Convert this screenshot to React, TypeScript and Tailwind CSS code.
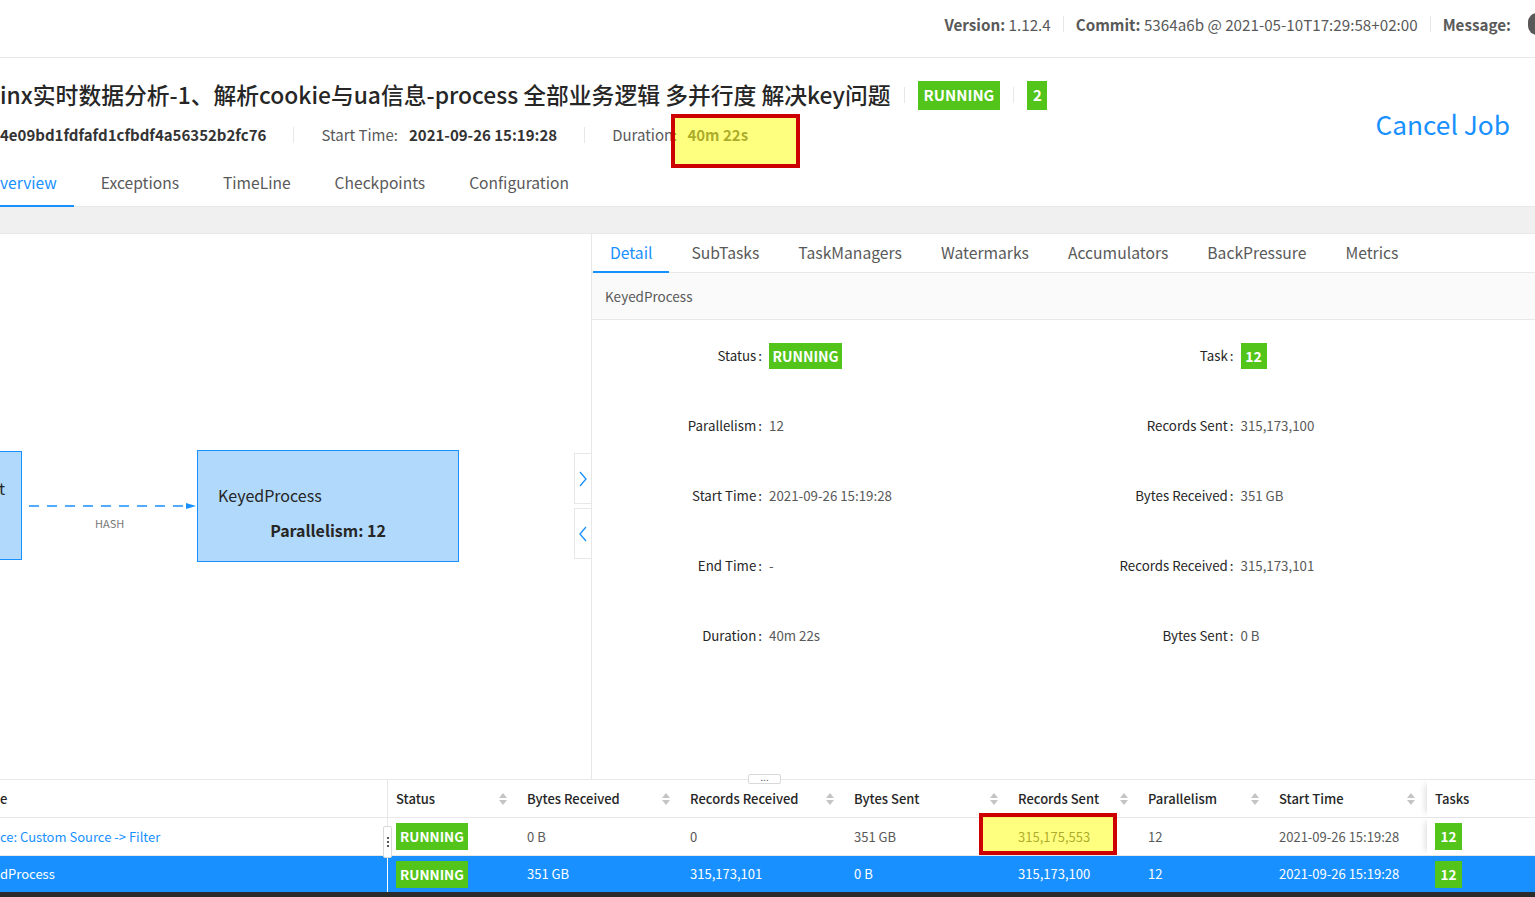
import React from "react";

function SortIcon() {
  return (
    <svg width="10" height="16" viewBox="0 0 10 16" className="shrink-0">
      <path d="M5 2 L9 7 H1 Z" fill="#c4c4c4" />
      <path d="M5 14 L9 9 H1 Z" fill="#c4c4c4" />
    </svg>
  );
}

function Badge({ children, className = "" }: { children: React.ReactNode; className?: string }) {
  return (
    <span className={"inline-flex items-center justify-center bg-[#52c41a] text-white font-bold " + className}>
      {children}
    </span>
  );
}

const cols = [
  { w: "w-[131px]", label: "Status" },
  { w: "w-[163px]", label: "Bytes Received" },
  { w: "w-[164px]", label: "Records Received" },
  { w: "w-[164px]", label: "Bytes Sent" },
  { w: "w-[130px]", label: "Records Sent" },
  { w: "w-[131px]", label: "Parallelism" },
  { w: "w-[156px]", label: "Start Time" },
];

function DetailRow({ l1, v1, l2, v2 }: { l1: string; v1: React.ReactNode; l2: string; v2: React.ReactNode }) {
  return (
    <div className="flex h-[70px] items-center">
      <div className="flex w-1/2 items-center">
        <div className="w-[170px] text-right text-[#262626] whitespace-nowrap">
          {l1}
          <span className="ml-[2px]">:</span>
        </div>
        <div className="ml-[7px] whitespace-nowrap">{v1}</div>
      </div>
      <div className="flex w-1/2 items-center">
        <div className="w-[170px] text-right text-[#262626] whitespace-nowrap">
          {l2}
          <span className="ml-[2px]">:</span>
        </div>
        <div className="ml-[7px] whitespace-nowrap">{v2}</div>
      </div>
    </div>
  );
}

export default function App() {
  return (
    <div className="w-[1535px] h-[897px] overflow-hidden bg-white flex flex-col text-[#595959] font-['Noto_Sans_CJK_SC','Noto_Sans',sans-serif]">
      {/* Top header */}
      <div className="h-[58px] shrink-0 border-b border-[#e8e8e8] flex justify-end items-start pt-[13px] text-[15.2px] leading-[22px] whitespace-nowrap">
        <div className="flex items-center">
          <span>
            <b className="font-bold">Version:</b> 1.12.4
          </span>
          <span className="mx-[12px] h-[16px] w-px bg-[#e8e8e8]" />
          <span>
            <b className="font-bold">Commit:</b> 5364a6b @ 2021-05-10T17:29:58+02:00
          </span>
          <span className="mx-[12px] h-[16px] w-px bg-[#e8e8e8]" />
          <b className="font-bold">Message:</b>
          <span className="ml-[17px] -mr-[11px] w-[18px] h-[22px] rounded-full bg-[#595959]" />
        </div>
      </div>

      {/* Job info */}
      <div className="flex shrink-0 h-[102px]">
        <div className="flex-1 min-w-0 pt-[21px]">
          <div className="flex items-center h-[32px] whitespace-nowrap">
            <h1 className="text-[22.8px] leading-[32px] text-[#262626] font-medium">
              inx实时数据分析-1、解析cookie与ua信息-process 全部业务逻辑 多并行度 解决key问题
            </h1>
            <span className="mx-[13px] h-[16px] w-px bg-[#e8e8e8]" />
            <Badge className="h-[29px] px-[6px] text-[15px]">RUNNING</Badge>
            <span className="mx-[13px] h-[16px] w-px bg-[#e8e8e8]" />
            <Badge className="h-[29px] w-[20px] text-[15px]">2</Badge>
          </div>
          <div className="flex items-center h-[24px] mt-[12px] text-[15px] whitespace-nowrap">
            <span className="font-bold text-[#333]">4e09bd1fdfafd1cfbdf4a56352b2fc76</span>
            <span className="mx-[27px] w-px h-[16px] bg-[#e8e8e8]" />
            <span>Start Time:</span>
            <span className="ml-[11px] font-bold text-[#333]">2021-09-26 15:19:28</span>
            <span className="mx-[27px] w-px h-[16px] bg-[#e8e8e8]" />
            <span className="relative">
              <span>Duration:</span>
              <span className="ml-[10px] font-bold">40m 22s</span>
              <span className="absolute left-[59px] top-[-10px] w-[129px] h-[54px] border-[4px] border-[#cc0000] bg-[rgba(255,255,0,0.5)]" />
            </span>
          </div>
        </div>
        <div className="pt-[48px] pr-[25px] text-[26.3px] leading-[36px] text-[#1890ff] whitespace-nowrap">Cancel Job</div>
      </div>

      {/* Job tabs */}
      <div className="flex h-[47px] shrink-0 border-b border-[#e8e8e8] text-[15.6px] gap-[10px] whitespace-nowrap">
        <div className="relative -ml-[17px] px-[17px] flex items-center text-[#1890ff]">
          verview
          <span className="absolute left-0 right-0 bottom-[-1px] h-[2px] bg-[#1890ff]" />
        </div>
        <div className="px-[17px] flex items-center">Exceptions</div>
        <div className="px-[17px] flex items-center">TimeLine</div>
        <div className="px-[17px] flex items-center">Checkpoints</div>
        <div className="px-[17px] flex items-center">Configuration</div>
      </div>

      <div className="h-[27px] shrink-0 bg-[#f0f0f0] border-b border-[#e8e8e8]" />

      {/* Main */}
      <div className="flex h-[545px] shrink-0">
        {/* Graph canvas */}
        <div className="relative w-[592px] h-full border-r border-[#e8e8e8] overflow-hidden">
          <div className="absolute left-[-240px] top-[217px] w-[262px] h-[109px] bg-[#b0d9fc] border border-[#1890ff]" />
          <span className="absolute left-[-1px] top-[243px] text-[16px] leading-[22px] text-[#262626]">t</span>
          <svg className="absolute left-[28px] top-[266px]" width="170" height="12" viewBox="0 0 170 12">
            <line x1="1" y1="6" x2="160" y2="6" stroke="#1890ff" strokeWidth="1.3" strokeDasharray="10 8" />
            <path d="M158 3 L168 6 L158 9 Z" fill="#1890ff" />
          </svg>
          <span className="absolute left-[95px] top-[281px] text-[11px] leading-[16px] text-[#777]">HASH</span>
          <div className="absolute left-[197px] top-[216px] w-[262px] h-[112px] bg-[#b0d9fc] border border-[#1890ff] text-[16px] text-[#262626]">
            <div className="absolute left-[20px] top-[33px] leading-[22px]">KeyedProcess</div>
            <div className="absolute left-0 right-0 top-[68px] text-center leading-[22px] font-bold">Parallelism: 12</div>
          </div>
          <div className="absolute right-0 top-[219px] w-[17px] h-[51px] bg-white border border-r-0 border-[#e8e8e8] flex items-center justify-center">
            <svg width="10" height="16" viewBox="0 0 10 16">
              <path d="M2 1 L8 8 L2 15" fill="none" stroke="#1890ff" strokeWidth="1.3" />
            </svg>
          </div>
          <div className="absolute right-0 top-[274px] w-[17px] h-[51px] bg-white border border-r-0 border-[#e8e8e8] flex items-center justify-center">
            <svg width="10" height="16" viewBox="0 0 10 16">
              <path d="M8 1 L2 8 L8 15" fill="none" stroke="#1890ff" strokeWidth="1.3" />
            </svg>
          </div>
        </div>

        {/* Right panel */}
        <div className="flex-1 min-w-0 flex flex-col">
          <div className="flex h-[39px] shrink-0 border-b border-[#e8e8e8] pl-[1px] gap-[5px] text-[15.7px] whitespace-nowrap">
            <div className="relative px-[17px] flex items-center text-[#1890ff]">
              Detail
              <span className="absolute left-0 right-0 bottom-[-1px] h-[2px] bg-[#1890ff]" />
            </div>
            <div className="px-[17px] flex items-center">SubTasks</div>
            <div className="px-[17px] flex items-center">TaskManagers</div>
            <div className="px-[17px] flex items-center">Watermarks</div>
            <div className="px-[17px] flex items-center">Accumulators</div>
            <div className="px-[17px] flex items-center">BackPressure</div>
            <div className="px-[17px] flex items-center">Metrics</div>
          </div>
          <div className="h-[47px] shrink-0 bg-[#fafafa] border-b border-[#e8e8e8] px-[13px] flex items-center text-[13.5px]">
            KeyedProcess
          </div>
          <div className="pt-[1px] text-[13.3px]">
            <DetailRow
              l1="Status"
              v1={<Badge className="h-[26px] w-[73px] text-[14px]">RUNNING</Badge>}
              l2="Task"
              v2={<Badge className="h-[26px] w-[26px] text-[14px]">12</Badge>}
            />
            <DetailRow l1="Parallelism" v1="12" l2="Records Sent" v2="315,173,100" />
            <DetailRow l1="Start Time" v1="2021-09-26 15:19:28" l2="Bytes Received" v2="351 GB" />
            <DetailRow l1="End Time" v1="-" l2="Records Received" v2="315,173,101" />
            <DetailRow l1="Duration" v1="40m 22s" l2="Bytes Sent" v2="0 B" />
          </div>
        </div>
      </div>

      {/* Table */}
      <div className="relative shrink-0 border-t border-[#e8e8e8] text-[13px] whitespace-nowrap">
        <div className="absolute left-[748px] top-[-6px] w-[33px] h-[10px] bg-white border border-[#d9d9d9] rounded-[2px] flex items-center justify-center text-[10px] leading-[10px] text-[#595959] z-10">
          <span className="-mt-[4px]">...</span>
        </div>
        {/* header */}
        <div className="flex h-[38px] border-b border-[#e8e8e8] text-[#262626] font-medium">
          <div className="w-[388px] border-r border-[#e8e8e8] flex items-center">e</div>
          {cols.map((c) => (
            <div key={c.label} className={c.w + " flex items-center justify-between pl-[8px] pr-[11px]"}>
              <span>{c.label}</span>
              <SortIcon />
            </div>
          ))}
          <div className="w-[108px] flex items-center pl-[8px] shadow-[-6px_0_6px_-4px_rgba(0,0,0,0.12)]">Tasks</div>
        </div>
        {/* row 1 */}
        <div className="relative flex h-[38px] border-b border-[#e8e8e8]">
          <div className="w-[388px] border-r border-[#e8e8e8] flex items-center text-[#1890ff]">ce: Custom Source -&gt; Filter</div>
          <div className="absolute left-[383px] top-[8px] w-[9px] h-[32px] bg-white border border-[#d9d9d9] rounded-[2px] flex flex-col items-center justify-center gap-[2px] z-10">
            <span className="w-[2px] h-[2px] bg-[#595959]" />
            <span className="w-[2px] h-[2px] bg-[#595959]" />
            <span className="w-[2px] h-[2px] bg-[#595959]" />
          </div>
          <div className="w-[131px] flex items-center pl-[8px]">
            <Badge className="h-[27px] w-[72px] text-[13.5px]">RUNNING</Badge>
          </div>
          <div className="w-[163px] flex items-center pl-[8px]">0 B</div>
          <div className="w-[164px] flex items-center pl-[8px]">0</div>
          <div className="w-[164px] flex items-center pl-[8px]">351 GB</div>
          <div className="relative w-[130px] flex items-center pl-[8px]">
            315,175,553
            <span className="absolute left-[-31px] top-[-5px] w-[138px] h-[42px] border-[4px] border-[#cc0000] bg-[rgba(255,255,0,0.5)]" />
          </div>
          <div className="w-[131px] flex items-center pl-[8px]">12</div>
          <div className="w-[156px] flex items-center pl-[8px]">2021-09-26 15:19:28</div>
          <div className="w-[108px] flex items-center pl-[8px] shadow-[-6px_0_6px_-4px_rgba(0,0,0,0.12)]">
            <Badge className="h-[27px] w-[27px] text-[13.5px]">12</Badge>
          </div>
        </div>
        {/* row 2 selected */}
        <div className="flex h-[36px] bg-[#1890ff] text-white">
          <div className="w-[388px] border-r border-white flex items-center">dProcess</div>
          <div className="w-[131px] flex items-center pl-[8px]">
            <Badge className="h-[27px] w-[72px] text-[13.5px]">RUNNING</Badge>
          </div>
          <div className="w-[163px] flex items-center pl-[8px]">351 GB</div>
          <div className="w-[164px] flex items-center pl-[8px]">315,173,101</div>
          <div className="w-[164px] flex items-center pl-[8px]">0 B</div>
          <div className="w-[130px] flex items-center pl-[8px]">315,173,100</div>
          <div className="w-[131px] flex items-center pl-[8px]">12</div>
          <div className="w-[156px] flex items-center pl-[8px]">2021-09-26 15:19:28</div>
          <div className="w-[108px] flex items-center pl-[8px]">
            <Badge className="h-[27px] w-[27px] text-[13.5px]">12</Badge>
          </div>
        </div>
      </div>
      <div className="h-[5px] shrink-0 bg-[#2b2b2b]" />
    </div>
  );
}
